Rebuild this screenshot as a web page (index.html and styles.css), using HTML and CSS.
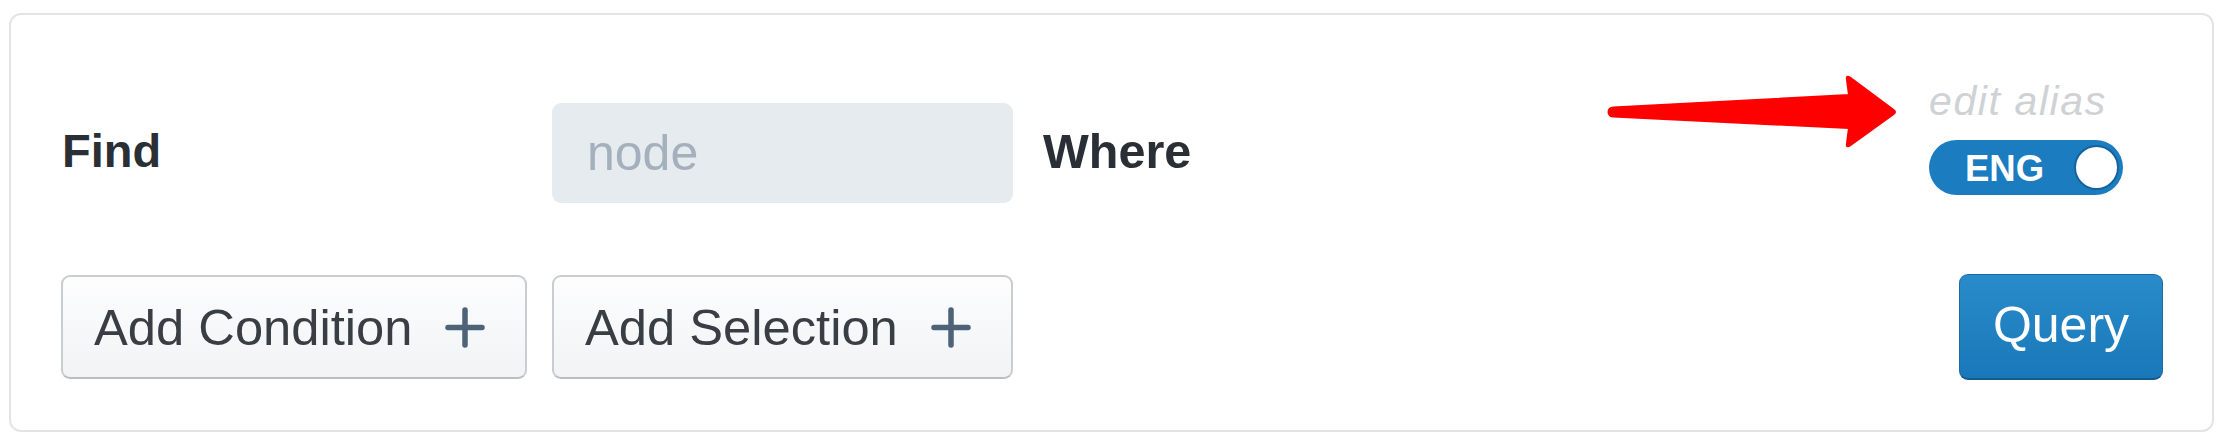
FILE: index.html
```html
<!DOCTYPE html>
<html lang="en">
<head>
<meta charset="utf-8">
<title>Query builder</title>
<link rel="stylesheet" href="styles.css">
</head>
<body>
  <section class="card">
    <div class="label">Find</div>
    <div class="node-field">node</div>
    <div class="label label-where">Where</div>
    <div class="alias-group">
      <div class="alias-text">edit alias</div>
      <div class="toggle">
        <span class="toggle-text">ENG</span>
        <span class="toggle-knob"></span>
      </div>
    </div>

    <button class="add-btn" type="button">
      <span>Add Condition</span>
      <svg class="plus" viewBox="0 0 40 41" width="40" height="41"><path d="M20 3 V38 M3 20.5 H37" /></svg>
    </button>
    <button class="add-btn" type="button">
      <span>Add Selection</span>
      <svg class="plus" viewBox="0 0 40 41" width="40" height="41"><path d="M20 3 V38 M3 20.5 H37" /></svg>
    </button>
    <div class="spacer"></div>
    <button class="query-btn" type="button">Query</button>
  </section>

  <svg class="annotation" viewBox="0 0 2236 447" width="2236" height="447">
    <path d="M1613,107.5 L1849,95 L1847,80 Q1846,75 1850,77.5 L1893,109.5 Q1897,112 1893,114.5 L1850,145.5 Q1846,148 1847,143 L1849,128 L1613,116.5 A4.5,4.5 0 0 1 1613,107.5 Z" />
  </svg>
</body>
</html>
```

FILE: styles.css
```css
* {
  box-sizing: border-box;
}

html, body {
  margin: 0;
  padding: 0;
  background: #ffffff;
}

body {
  width: 2236px;
  height: 447px;
  position: relative;
  font-family: "Liberation Sans", Arial, sans-serif;
  color: #2b3036;
  overflow: hidden;
}

.card {
  margin: 13px 0 0 9px;
  width: 2205px;
  height: 419px;
  border: 2px solid #e3e4e5;
  border-radius: 12px;
  padding: 63px 49px 0 50px;
  display: grid;
  grid-template-columns: 467px 461px 1fr 234px;
  grid-template-rows: 125px 106px;
  column-gap: 24px;
  row-gap: 71px;
}

.label {
  align-self: end;
  height: 100px;
  padding-bottom: 4px;
  padding-left: 1px;
  font-size: 47px;
  line-height: 96px;
  font-weight: 700;
  color: #2a2f35;
}

.label-where {
  padding-left: 6px;
  font-size: 48.5px;
}

.node-field {
  align-self: end;
  height: 100px;
  border-radius: 9px;
  background: #e6ebef;
  padding-left: 35px;
  font-size: 50px;
  line-height: 100px;
  color: #a4b0bb;
}

.alias-group {
  align-self: start;
  justify-self: start;
  display: flex;
  flex-direction: column;
  align-items: flex-start;
}

.alias-text {
  font-size: 41px;
  line-height: 46px;
  font-style: italic;
  letter-spacing: 1.6px;
  color: #cfd2d5;
}

.toggle {
  margin-top: 16px;
  width: 194px;
  height: 55px;
  border-radius: 28px;
  background: #1b7cbf;
  display: flex;
  align-items: center;
  justify-content: space-between;
  padding: 0 4px 0 36px;
}

.toggle-text {
  font-size: 36.5px;
  font-weight: 700;
  color: #ffffff;
  line-height: 40px;
  padding-top: 2px;
}

.toggle-knob {
  width: 45px;
  height: 45px;
  border-radius: 50%;
  background: #ffffff;
  border: 2px solid #14639e;
}

.add-btn {
  align-self: center;
  justify-self: start;
  height: 104px;
  display: inline-flex;
  align-items: center;
  gap: 33px;
  padding: 0 40px 0 31px;
  border: 2px solid #c9cdd1;
  border-bottom-color: #b9bec3;
  border-radius: 9px;
  background: linear-gradient(#fdfdfe, #f1f3f5);
  font-family: "Liberation Sans", Arial, sans-serif;
  font-size: 50.7px;
  color: #393e44;
  cursor: pointer;
}

.plus {
  display: block;
  fill: none;
  stroke: #4e6377;
  stroke-width: 5.5;
  stroke-linecap: round;
}

.query-btn {
  align-self: center;
  justify-self: end;
  width: 204px;
  height: 106px;
  padding: 0 0 4px;
  border: 1px solid #1a6aa3;
  border-bottom: 2px solid #145a8b;
  border-radius: 9px;
  background: linear-gradient(#2a8bca, #1878b9);
  font-family: "Liberation Sans", Arial, sans-serif;
  font-size: 50px;
  color: #ffffff;
  cursor: pointer;
}

.annotation {
  position: absolute;
  left: 0;
  top: 0;
  pointer-events: none;
}

.annotation path {
  fill: #fe0000;
  stroke: #fe0000;
  stroke-width: 2;
  stroke-linejoin: round;
}
```
